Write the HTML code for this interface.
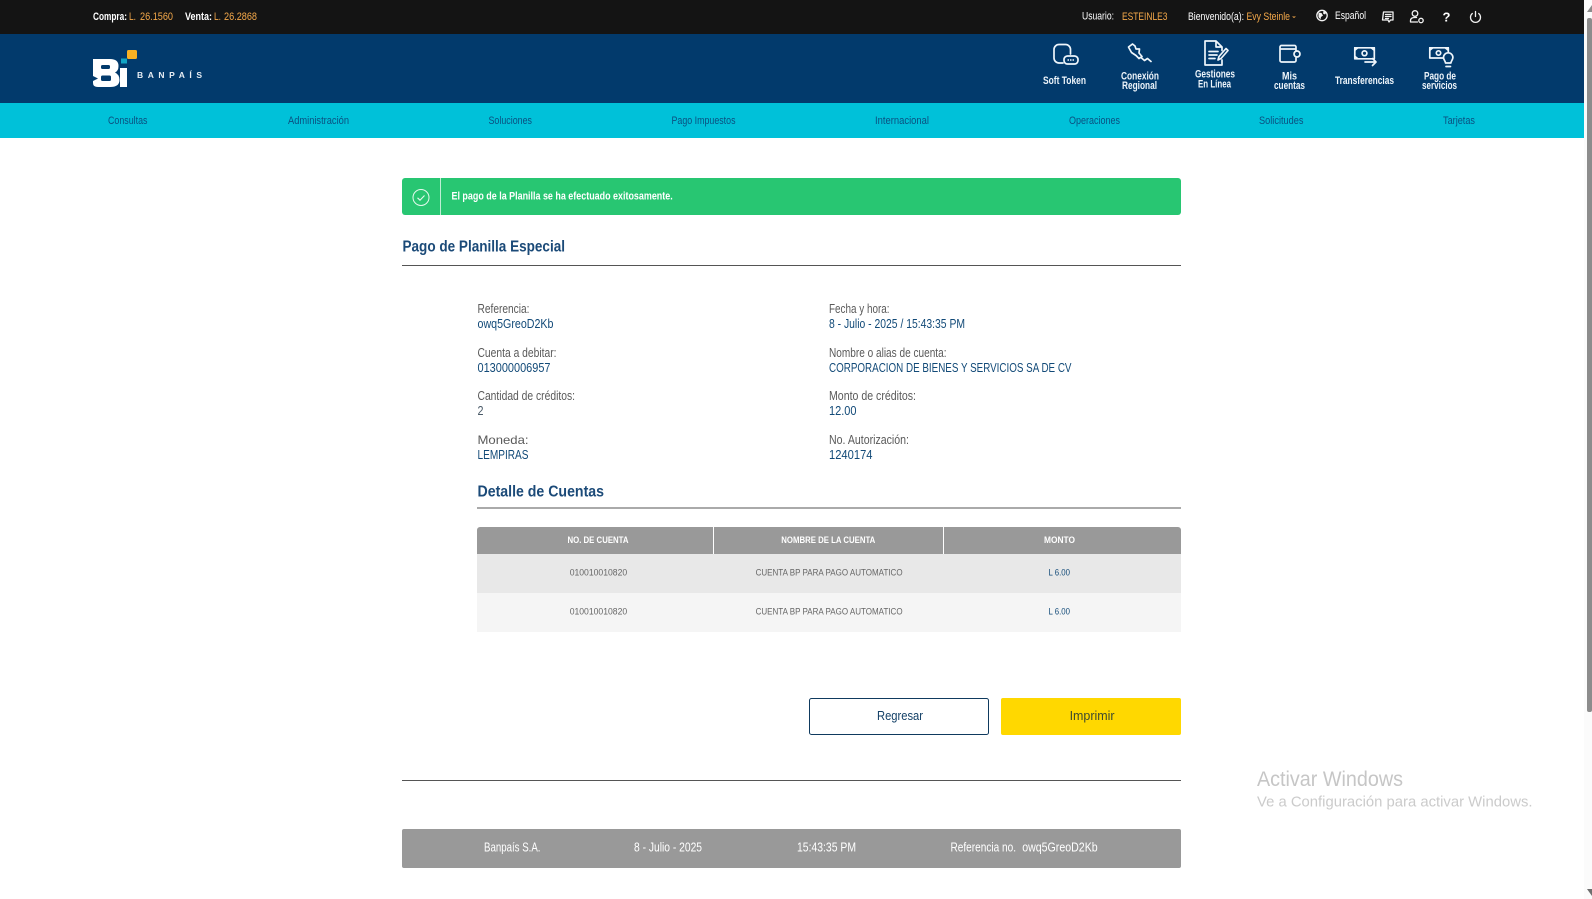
<!DOCTYPE html>
<html lang="es">
<head>
<meta charset="utf-8">
<title>Pago de Planilla Especial</title>
<style>
html,body{margin:0;padding:0;background:#fff;width:1592px;height:899px;overflow:hidden}
svg{display:block;position:absolute;left:0;top:0}
text{font-family:"Liberation Sans",sans-serif;white-space:pre}
.top{font-size:11px;font-weight:700;fill:#fff}
.topn{font-size:11px;fill:#fff}
.or{font-size:11px;fill:#f5a94a}
.hd{font-size:11px;font-weight:700;fill:#eef5fb}
.nav{font-size:11px;fill:#0b5080}
.lb{font-size:12.500px;fill:#5a5a5a}
.vl{font-size:12.500px;fill:#124a78}
.ttl{font-size:16px;font-weight:700;fill:#1b4a78}
.th{font-size:9px;font-weight:700;fill:#fff}
.td{font-size:9px;fill:#666}
.tv{font-size:9px;fill:#124a78}
.ft{font-size:12.500px;fill:#fff}
.ic{fill:none;stroke:#eef5fb;stroke-width:1.700;stroke-linecap:round;stroke-linejoin:round}
.tic{fill:none;stroke:#f2f2f2;stroke-width:1.300;stroke-linecap:round;stroke-linejoin:round}
</style>
</head>
<body>
<svg width="1592" height="899" viewBox="0 0 1592 899" xmlns="http://www.w3.org/2000/svg">
<!-- bars -->
<rect x="0" y="0" width="1584" height="34" fill="#141414"/>
<rect x="0" y="34" width="1584" height="69" fill="#023a6c"/>
<rect x="0" y="103" width="1584" height="35" fill="#00c1d9"/>

<!-- scrollbar -->
<rect x="1584" y="0" width="8" height="899" fill="#fbfbfb"/>
<rect x="1587" y="18" width="5" height="694" rx="2" fill="#8c8c8c"/>
<path d="M1592 5V12H1587Z" fill="#8c8c8c"/>
<path d="M1587 889H1592V896Z" fill="#6e6e6e"/>

<!-- top bar left -->
<text class="top" x="93" y="20" textLength="34" lengthAdjust="spacingAndGlyphs">Compra:</text>
<text class="or" x="129" y="20" textLength="7" lengthAdjust="spacingAndGlyphs">L.</text>
<text class="or" x="140" y="20" textLength="33" lengthAdjust="spacingAndGlyphs">26.1560</text>
<text class="top" x="185" y="20" textLength="27" lengthAdjust="spacingAndGlyphs">Venta:</text>
<text class="or" x="214" y="20" textLength="7" lengthAdjust="spacingAndGlyphs">L.</text>
<text class="or" x="224" y="20" textLength="33" lengthAdjust="spacingAndGlyphs">26.2868</text>

<!-- top bar right -->
<text class="topn" x="1082" y="19.500" textLength="32" lengthAdjust="spacingAndGlyphs">Usuario:</text>
<text class="or" x="1122" y="20" textLength="45.500" lengthAdjust="spacingAndGlyphs">ESTEINLE3</text>
<text class="topn" x="1188" y="20" textLength="56" lengthAdjust="spacingAndGlyphs">Bienvenido(a):</text>
<text class="or" x="1246.500" y="20" textLength="43.500" lengthAdjust="spacingAndGlyphs">Evy Steinle</text>
<path d="M1292 16.500h4l-2 1.500z" fill="#f5a94a"/>
<circle cx="1322" cy="15.500" r="5.200" class="tic"/>
<path d="M1318.500 12.500l3 .5 1.500 2.500-2 1.500-.5 2.500-2-2.500zM1323.500 11l3 1.500-1.500 2-2-1z" fill="#f2f2f2"/>
<text class="topn" x="1335" y="19" textLength="31" lengthAdjust="spacingAndGlyphs">Español</text>
<path class="tic" d="M1383.500 12h9.500v8h-2.500l-1.500 2-1-2h-5.500zM1385.500 14.500h5.500M1385.500 16.500h5.500M1385.500 18.500h3"/>
<circle class="tic" cx="1415" cy="13.500" r="2.800"/>
<path class="tic" d="M1410.500 22v-1.500q0-3 4.500-3h1.500M1410.500 22h7"/>
<circle class="tic" cx="1421" cy="20.500" r="2.200"/>
<text x="1442.500" y="21.500" font-size="13" font-weight="700" fill="#fff">?</text>
<path class="tic" stroke-width="1.600" d="M1472.300 13.500a5 5 0 1 0 6.400 0M1475.500 11.500v5"/>

<!-- logo -->
<path d="M93 59H110Q118.500 59 118.500 66Q118.500 71 115 72.500Q119.500 74.500 119.500 80Q119.500 87 110 87H98Q93 87 93 83V81L98 78.500L93 76Z" fill="#fff"/>
<rect x="101" y="65" width="9" height="4" rx="1.500" fill="#023a6c"/>
<rect x="101" y="75.500" width="10" height="5.500" rx="1.500" fill="#023a6c"/>
<rect x="120" y="68" width="7" height="19" fill="#fff"/>
<rect x="121" y="58.500" width="6" height="5" fill="#12a5c4"/>
<rect x="127" y="50" width="10" height="9" rx="1.500" fill="#f9b122"/>
<text x="137" y="78" font-size="8.500" font-weight="700" fill="#e8eef4" textLength="65" lengthAdjust="spacing">BANPAÍS</text>

<!-- header icons -->
<path class="ic" d="M1070.500 54V49.500a5 5 0 0 0-5-5h-6.500a5 5 0 0 0-5 5V58a5 5 0 0 0 5 5h4"/>
<rect class="ic" x="1064" y="56" width="14" height="8" rx="3.500"/>
<path d="M1067.500 60h7" stroke="#eef5fb" stroke-width="1.500" stroke-dasharray="1.500 1"/>
<text class="hd" x="1043" y="84" textLength="43" lengthAdjust="spacingAndGlyphs">Soft Token</text>

<path class="ic" stroke-width="1.400" d="M1128.500 47l4-3 2.500 2 1 3h3.500l-.5 4 3 3.500-3 2-3-3-4.500-3-2.500-4.500z"/>
<path class="ic" stroke-width="2.500" d="M1141 57.500l3.500 3 3-2 3.500 3"/>
<text class="hd" x="1121" y="79.300" textLength="38" lengthAdjust="spacingAndGlyphs">Conexión</text>
<text class="hd" x="1122" y="89" textLength="35" lengthAdjust="spacingAndGlyphs">Regional</text>

<path class="ic" d="M1222 50.500V47l-6-6h-11v24h17v-5M1216 41v6h6M1209 51.500h9M1209 55h8M1209 58.500h6"/>
<path class="ic" d="M1218 60l1-3.500 7-8 2 2-7 8z"/>
<text class="hd" x="1195" y="77.700" textLength="40" lengthAdjust="spacingAndGlyphs">Gestiones</text>
<text class="hd" x="1198" y="87.300" textLength="33" lengthAdjust="spacingAndGlyphs">En Línea</text>

<path class="ic" d="M1296 50.500V47a1.500 1.500 0 0 0-1.500-1.500h-13a1.500 1.500 0 0 0-1.500 1.500v13.500a1.500 1.500 0 0 0 1.500 1.500h13a1.500 1.500 0 0 0 1.500-1.500V58M1280 49h16"/>
<circle class="ic" cx="1297" cy="54" r="3"/>
<text class="hd" x="1282" y="79.500" textLength="15" lengthAdjust="spacingAndGlyphs">Mis</text>
<text class="hd" x="1274" y="89" textLength="31" lengthAdjust="spacingAndGlyphs">cuentas</text>

<rect class="ic" x="1354.800" y="47.800" width="19.500" height="11" stroke-width="2"/>
<circle class="ic" cx="1364.500" cy="53.300" r="2.400"/>
<path d="M1354 47h6l-6 5zM1375 47h-6l6 5zM1354 59.500h6l-6-5z" fill="#eef5fb"/>
<path class="ic" stroke-width="2" d="M1365 62h11m-3.500-3.500l3.500 3.500-3.500 3.500"/>
<text class="hd" x="1335" y="84" textLength="59" lengthAdjust="spacingAndGlyphs">Transferencias</text>

<path class="ic" stroke-width="2" d="M1443 58h-13.200V47.800h18.500v4"/>
<circle class="ic" cx="1438.500" cy="53" r="2.200"/>
<path d="M1429 47h6l-6 5zM1449 47h-6l6 5z" fill="#eef5fb"/>
<path class="ic" d="M1445.500 63c0-2-2-3-2-5.500a4.700 4.700 0 0 1 9.400 0c0 2.500-2 3.500-2 5.500zM1446 66.500h4.500"/>
<text class="hd" x="1424" y="79.300" textLength="32" lengthAdjust="spacingAndGlyphs">Pago de</text>
<text class="hd" x="1422" y="89" textLength="35" lengthAdjust="spacingAndGlyphs">servicios</text>

<!-- nav -->
<text class="nav" x="108" y="124" textLength="39.500" lengthAdjust="spacingAndGlyphs">Consultas</text>
<text class="nav" x="288" y="124" textLength="61" lengthAdjust="spacingAndGlyphs">Administración</text>
<text class="nav" x="488.500" y="124" textLength="43.500" lengthAdjust="spacingAndGlyphs">Soluciones</text>
<text class="nav" x="671.500" y="124" textLength="64" lengthAdjust="spacingAndGlyphs">Pago Impuestos</text>
<text class="nav" x="875" y="124" textLength="54" lengthAdjust="spacingAndGlyphs">Internacional</text>
<text class="nav" x="1069" y="124" textLength="51" lengthAdjust="spacingAndGlyphs">Operaciones</text>
<text class="nav" x="1259" y="124" textLength="44.500" lengthAdjust="spacingAndGlyphs">Solicitudes</text>
<text class="nav" x="1443" y="124" textLength="32" lengthAdjust="spacingAndGlyphs">Tarjetas</text>

<!-- alert -->
<rect x="402" y="178" width="779" height="37" rx="3" fill="#28c672"/>
<rect x="440" y="178" width="1" height="37" fill="#bfeed4"/>
<circle cx="421" cy="197.500" r="8" fill="none" stroke="#e6f9ee" stroke-width="1"/>
<path d="M417.500 197.800l2.500 2.400 4.500-4.700" fill="none" stroke="#e6f9ee" stroke-width="1.100"/>
<text x="451.500" y="199.500" font-size="11" font-weight="700" fill="#fff" textLength="221.200" lengthAdjust="spacingAndGlyphs">El pago de la Planilla se ha efectuado exitosamente.</text>

<!-- title -->
<text class="ttl" x="402.500" y="251.500" textLength="162.500" lengthAdjust="spacingAndGlyphs">Pago de Planilla Especial</text>
<rect x="402" y="265" width="779" height="1" fill="#555"/>

<!-- details -->
<text class="lb" x="477.500" y="313" textLength="52" lengthAdjust="spacingAndGlyphs">Referencia:</text>
<text class="vl" x="477.500" y="328" textLength="76" lengthAdjust="spacingAndGlyphs">owq5GreoD2Kb</text>
<text class="lb" x="477.500" y="357" textLength="79" lengthAdjust="spacingAndGlyphs">Cuenta a debitar:</text>
<text class="vl" x="477.500" y="372" textLength="73" lengthAdjust="spacingAndGlyphs">013000006957</text>
<text class="lb" x="477.500" y="400" textLength="97.500" lengthAdjust="spacingAndGlyphs">Cantidad de créditos:</text>
<text class="vl" x="477.500" y="415" textLength="6" lengthAdjust="spacingAndGlyphs" style="fill:#4a5a68">2</text>
<text class="lb" x="477.500" y="444" textLength="51" lengthAdjust="spacingAndGlyphs" style="font-size:12px">Moneda:</text>
<text class="vl" x="477.500" y="459" textLength="51" lengthAdjust="spacingAndGlyphs">LEMPIRAS</text>

<text class="lb" x="829" y="313" textLength="60.500" lengthAdjust="spacingAndGlyphs">Fecha y hora:</text>
<text class="vl" x="829" y="328" textLength="136" lengthAdjust="spacingAndGlyphs">8 - Julio - 2025 / 15:43:35 PM</text>
<text class="lb" x="829" y="357" textLength="117.500" lengthAdjust="spacingAndGlyphs">Nombre o alias de cuenta:</text>
<text class="vl" x="829" y="372" textLength="242.500" lengthAdjust="spacingAndGlyphs">CORPORACION DE BIENES Y SERVICIOS SA DE CV</text>
<text class="lb" x="829" y="400" textLength="87" lengthAdjust="spacingAndGlyphs">Monto de créditos:</text>
<text class="vl" x="829" y="415" textLength="27.500" lengthAdjust="spacingAndGlyphs">12.00</text>
<text class="lb" x="829" y="444" textLength="80" lengthAdjust="spacingAndGlyphs">No. Autorización:</text>
<text class="vl" x="829" y="459" textLength="43.500" lengthAdjust="spacingAndGlyphs">1240174</text>

<!-- detalle -->
<text class="ttl" x="477.500" y="496.500" textLength="126.500" lengthAdjust="spacingAndGlyphs">Detalle de Cuentas</text>
<rect x="477" y="507.500" width="704" height="1" fill="#555"/>

<!-- table -->
<path d="M477 554V530a3 3 0 0 1 3-3H1178a3 3 0 0 1 3 3V554Z" fill="#999"/>
<rect x="713" y="527" width="1" height="27" fill="#fff"/>
<rect x="943" y="527" width="1" height="27" fill="#fff"/>
<rect x="477" y="554" width="704" height="39" fill="#e8e8e8"/>
<rect x="477" y="593" width="704" height="39" fill="#f5f5f5"/>
<text class="th" x="567.500" y="543" textLength="61" lengthAdjust="spacingAndGlyphs">NO. DE CUENTA</text>
<text class="th" x="781.300" y="543" textLength="94" lengthAdjust="spacingAndGlyphs">NOMBRE DE LA CUENTA</text>
<text class="th" x="1044" y="543" textLength="31" lengthAdjust="spacingAndGlyphs">MONTO</text>
<text class="td" x="569.700" y="575.500" textLength="57.500" lengthAdjust="spacingAndGlyphs">010010010820</text>
<text class="td" x="755.600" y="575.500" textLength="147" lengthAdjust="spacingAndGlyphs">CUENTA BP PARA PAGO AUTOMATICO</text>
<text class="tv" x="1048.500" y="575.500" textLength="21.500" lengthAdjust="spacingAndGlyphs">L 6.00</text>
<text class="td" x="569.700" y="614.500" textLength="57.500" lengthAdjust="spacingAndGlyphs">010010010820</text>
<text class="td" x="755.600" y="614.500" textLength="147" lengthAdjust="spacingAndGlyphs">CUENTA BP PARA PAGO AUTOMATICO</text>
<text class="tv" x="1048.500" y="614.500" textLength="21.500" lengthAdjust="spacingAndGlyphs">L 6.00</text>

<!-- buttons -->
<rect x="809.500" y="698.500" width="179" height="36" rx="2" fill="#fff" stroke="#0f3a5e" stroke-width="1"/>
<text x="877" y="720" font-size="12.500" fill="#123f66" textLength="46" lengthAdjust="spacingAndGlyphs">Regresar</text>
<rect x="1001" y="698" width="180" height="37" rx="2" fill="#ffd800"/>
<text x="1069.600" y="720" font-size="12.500" fill="#3c4a30" textLength="45" lengthAdjust="spacingAndGlyphs">Imprimir</text>

<rect x="402" y="780" width="779" height="1" fill="#555"/>

<!-- footer -->
<rect x="402" y="829" width="779" height="39" rx="2" fill="#999"/>
<text class="ft" x="484" y="851.500" textLength="56.500" lengthAdjust="spacingAndGlyphs">Banpaís S.A.</text>
<text class="ft" x="634" y="851.500" textLength="68" lengthAdjust="spacingAndGlyphs">8 - Julio - 2025</text>
<text class="ft" x="797" y="851.500" textLength="59" lengthAdjust="spacingAndGlyphs">15:43:35 PM</text>
<text class="ft" x="950.500" y="851.500" textLength="65.500" lengthAdjust="spacingAndGlyphs">Referencia no.</text>
<text class="ft" x="1022.200" y="851.500" textLength="75.500" lengthAdjust="spacingAndGlyphs">owq5GreoD2Kb</text>

<!-- watermark -->
<text x="1257" y="786" font-size="21" fill="#c6c6c6" textLength="146" lengthAdjust="spacingAndGlyphs">Activar Windows</text>
<text x="1257" y="806.500" font-size="14.500" fill="#cbcbcb" textLength="275.500" lengthAdjust="spacingAndGlyphs">Ve a Configuración para activar Windows.</text>
</svg>
</body>
</html>
